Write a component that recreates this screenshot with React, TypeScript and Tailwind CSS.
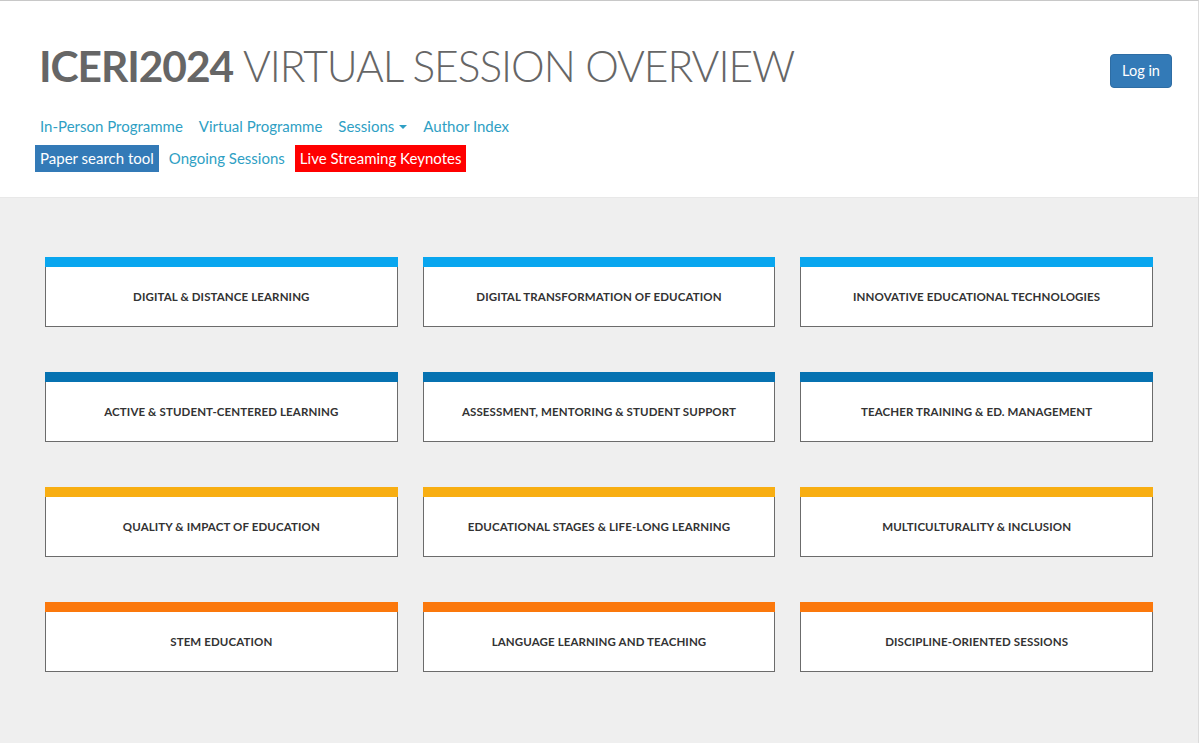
import React from 'react';

type Session = { title: string; color: string };

const rows: Session[][] = [
    [
        { title: 'Digital & Distance Learning', color: 'bg-[#09a6ef]' },
        { title: 'Digital Transformation of Education', color: 'bg-[#09a6ef]' },
        { title: 'Innovative Educational Technologies', color: 'bg-[#09a6ef]' },
    ],
    [
        { title: 'Active & Student-Centered Learning', color: 'bg-[#0672b1]' },
        { title: 'Assessment, Mentoring & Student Support', color: 'bg-[#0672b1]' },
        { title: 'Teacher Training & Ed. Management', color: 'bg-[#0672b1]' },
    ],
    [
        { title: 'Quality & Impact of Education', color: 'bg-[#f8ae12]' },
        { title: 'Educational Stages & Life-Long Learning', color: 'bg-[#f8ae12]' },
        { title: 'Multiculturality & Inclusion', color: 'bg-[#f8ae12]' },
    ],
    [
        { title: 'STEM Education', color: 'bg-[#fb780c]' },
        { title: 'Language Learning and Teaching', color: 'bg-[#fb780c]' },
        { title: 'Discipline-Oriented Sessions', color: 'bg-[#fb780c]' },
    ],
];

const SessionCard = ({ title, color }: Session) => (
    <a href="#" className="flex flex-col h-[70px] bg-white border-x border-b border-[#6b6b6b]">
        <div className={`h-[10px] -mx-px ${color}`}></div>
        <div className="flex-1 flex items-center justify-center">
            <span className="text-[11.5px] font-bold uppercase text-[#333] tracking-[0.01em]">{title}</span>
        </div>
    </a>
);

export default function App() {
    return (
        <div className="min-h-[743px] flex flex-col bg-[#efefef] border-t border-[#c8c8c8] border-r border-r-[#dcdcdc] font-['Lato',sans-serif]">
            {/* 헤더 */}
            <header className="bg-white border-b border-[#e8e8e8] pl-[35px] pr-[26px] pt-[40px] pb-[25px] flex justify-between">
                <div>
                    <h1 className="pl-[4px] text-[42.5px] leading-[50px] text-[#666] tracking-[-0.025em] whitespace-nowrap">
                        <span className="font-bold">ICERI2024</span>{' '}
                        <span className="font-light">VIRTUAL SESSION OVERVIEW</span>
                    </h1>
                    <nav className="mt-[22px] pl-[5px] flex gap-[16px] text-[15px] text-[#2f9fc4] leading-[26px]">
                        <a href="#">In-Person Programme</a>
                        <a href="#">Virtual Programme</a>
                        <a href="#" className="flex items-center gap-[5px]">
                            Sessions
                            <span className="border-x-[4px] border-x-transparent border-t-[4px] border-t-[#2f9fc4] mt-[2px]"></span>
                        </a>
                        <a href="#">Author Index</a>
                    </nav>
                    <div className="mt-[6px] flex items-center gap-[10px] text-[15px] leading-[27px]">
                        <a href="#" className="bg-[#337ab7] text-white px-[5px]">Paper search tool</a>
                        <a href="#" className="text-[#2f9fc4]">Ongoing Sessions</a>
                        <a href="#" className="bg-[#f00] text-white px-[5px]">Live Streaming Keynotes</a>
                    </div>
                </div>
                <div className="pt-[13px]">
                    <button className="bg-[#337ab7] text-white text-[14.5px] rounded-[4px] border border-[#2e6da4] w-[62px] h-[34px]">
                        Log in
                    </button>
                </div>
            </header>

            {/* 세션 그리드 */}
            <main className="flex-1 px-[45px] pt-[59px] pb-[70px] flex flex-col gap-[45px]">
                {rows.map((row, i) => (
                    <div key={i} className="grid grid-cols-3 gap-x-[25px] w-[1108px]">
                        {row.map((s) => (
                            <SessionCard key={s.title} {...s} />
                        ))}
                    </div>
                ))}
            </main>
        </div>
    );
}
